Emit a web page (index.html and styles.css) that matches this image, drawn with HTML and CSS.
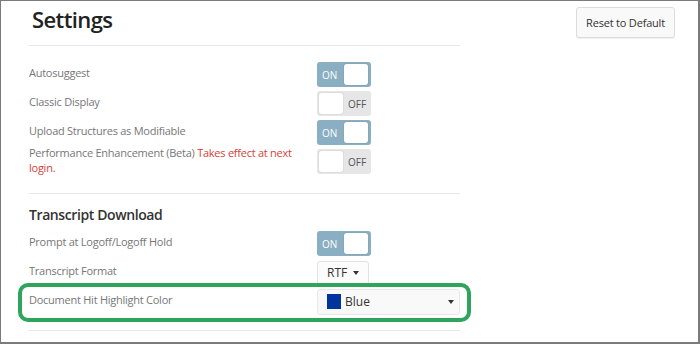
FILE: index.html
```html
<!DOCTYPE html>
<html>
<head>
	<meta charset="utf-8">
	<title>Settings</title>
	<link rel="stylesheet" href="styles.css">
</head>
<body>
<div class="frame">
	<div class="settings">
		<h1 class="title">Settings</h1>
		<hr class="divider">

		<div class="group">
			<div class="row">
				<span class="label">Autosuggest</span>
				<span class="toggle on"><span class="state">ON</span><span class="knob"></span></span>
			</div>
			<div class="row">
				<span class="label">Classic Display</span>
				<span class="toggle off"><span class="knob"></span><span class="state">OFF</span></span>
			</div>
			<div class="row">
				<span class="label">Upload Structures as Modifiable</span>
				<span class="toggle on"><span class="state">ON</span><span class="knob"></span></span>
			</div>
			<div class="row">
				<span class="label">Performance Enhancement (Beta) <span class="warn">Takes effect at next login.</span></span>
				<span class="toggle off"><span class="knob"></span><span class="state">OFF</span></span>
			</div>
		</div>
		<hr class="divider">

		<h2 class="subtitle">Transcript Download</h2>
		<div class="group last">
			<div class="row">
				<span class="label">Prompt at Logoff/Logoff Hold</span>
				<span class="toggle on"><span class="state">ON</span><span class="knob"></span></span>
			</div>
			<div class="row">
				<span class="label">Transcript Format</span>
				<span class="dropdown">RTF <span class="caret"></span></span>
			</div>
			<div class="row highlight">
				<span class="label">Document Hit Highlight Color</span>
				<span class="select"><span class="swatch"></span><span class="select-text">Blue</span><span class="caret"></span></span>
			</div>
		</div>
		<hr class="divider">
	</div>

	<button class="reset" type="button">Reset to Default</button>
</div>
</body>
</html>
```

FILE: styles.css
```css
body{margin:0;background:#fff;font-family:"Open Sans","Liberation Sans",sans-serif;}

.frame{display:flex;align-items:flex-start;width:700px;height:344px;box-sizing:border-box;border-style:solid;border-color:#7b7b7b;border-width:1px 2px 2px 1px;padding-left:28px;background:#fff;}
.settings{width:431px;}

.title{margin:3px 0 11px 3px;font-size:22px;line-height:30px;font-weight:600;letter-spacing:-0.6px;color:#222;}
.subtitle{margin:11px 0 4px;font-size:14px;line-height:20px;font-weight:600;letter-spacing:-0.4px;color:#333;}
.divider{margin:0;border:0;border-top:1px solid #e8e8e8;height:0;}

.group{padding:14px 0 17px;}
.group.last{padding:0 0 14px;}

.row{display:flex;align-items:center;min-height:29px;}
.row.highlight{position:relative;}
.row.highlight:after{content:"";position:absolute;top:-4px;bottom:-6px;left:-11px;right:-11px;border:4px solid #2ea55a;border-radius:10px;}
.label{flex:0 0 278px;margin:-4px 10px 0 0;font-size:11px;line-height:15px;letter-spacing:-0.25px;color:#777;}
.warn{color:#d43f3a;}

.toggle{display:flex;align-items:center;width:54px;height:25px;box-sizing:border-box;border-radius:3px;font-size:10px;}
.toggle.on{background:#8aaec2;color:#fff;justify-content:space-between;padding:2px 3px 2px 5px;}
.toggle.off{background:#e6e6e6;color:#555;padding:2px;}
.toggle.off .state{margin-left:5px;}
.knob{width:24px;height:21px;background:#fff;border-radius:3px;box-shadow:0 0 0 1px rgba(0,0,0,.04);}

.dropdown{display:flex;align-items:center;height:24px;box-sizing:border-box;padding:0 9px;border:1px solid #e2e2e2;border-radius:3px;background:#fcfcfc;font-size:12px;color:#333;}
.dropdown .caret{margin-left:6px;}
.caret{width:0;height:0;border-top:4px solid #333;border-left:3px solid transparent;border-right:3px solid transparent;}

.select{display:flex;align-items:center;width:143px;height:26px;box-sizing:border-box;padding:0 5px 0 9px;border:1px solid #e8e8e8;border-radius:3px;background:#f9f9f9;font-size:12px;color:#333;}
.swatch{width:14px;height:15px;background:#00359e;margin-right:4px;}
.select-text{flex:1;}

.reset{margin:6px 23px 0 auto;width:99px;height:31px;padding:0;border:1px solid #dcdcdc;border-radius:3px;background:#f9f9f9;box-shadow:0 1px 1px rgba(0,0,0,.06);font-family:"Open Sans","Liberation Sans",sans-serif;font-size:11px;letter-spacing:-0.2px;color:#333;}
```
